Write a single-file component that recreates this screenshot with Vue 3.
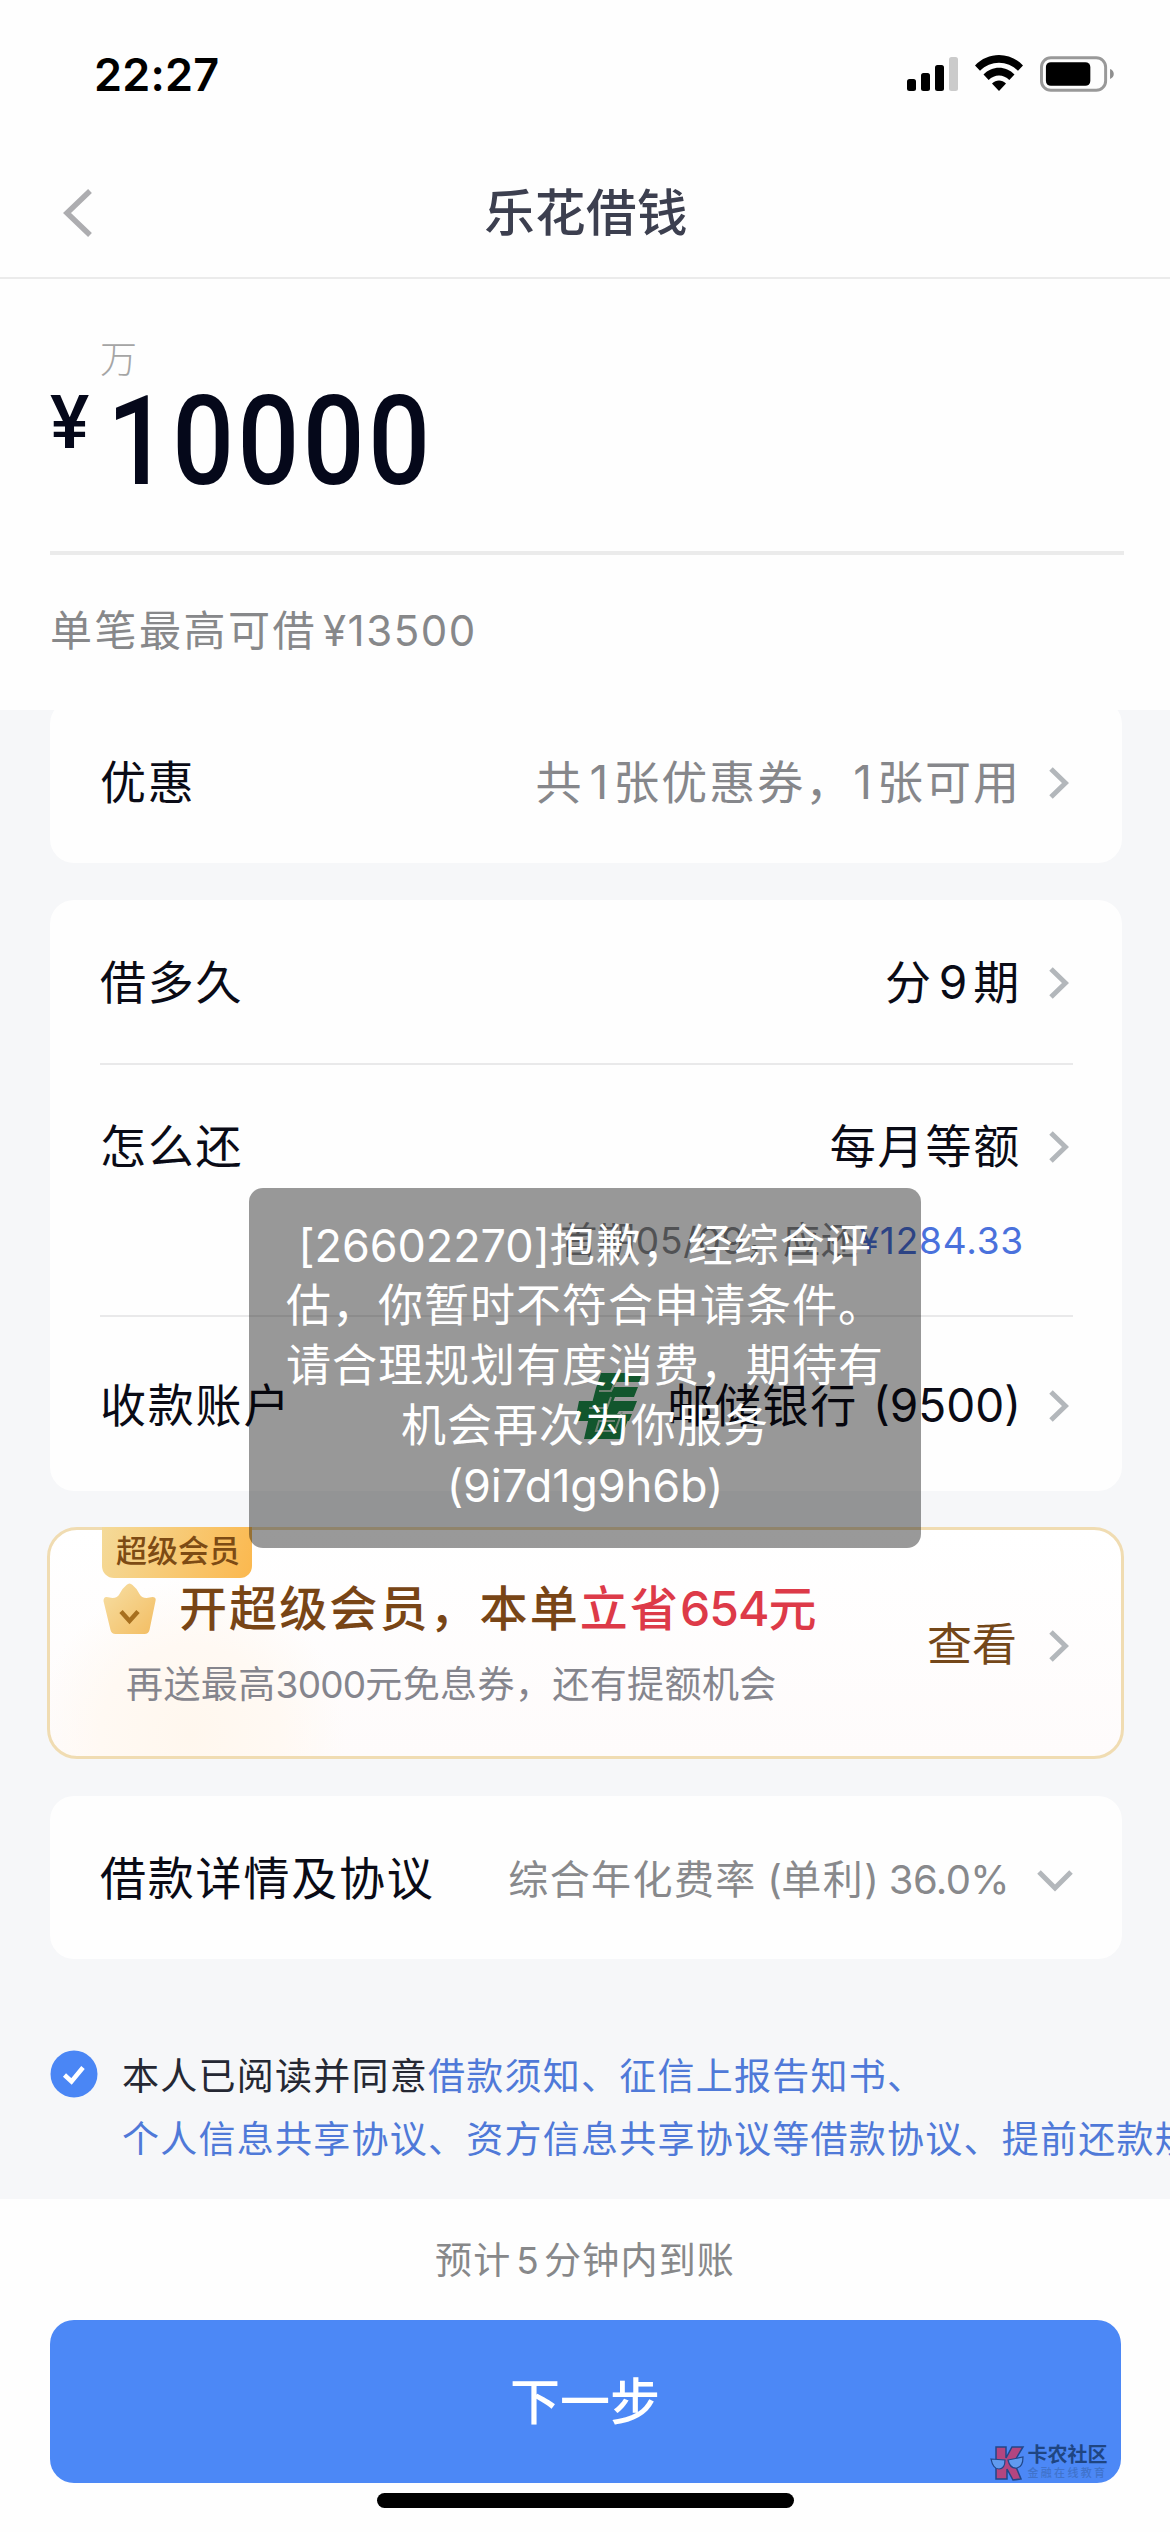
<script setup>
const toastLines = [
  { code: '[26602270]', text: '抱歉，经综合评' },
  { code: '', text: '估，你暂时不符合申请条件。' },
  { code: '', text: '请合理规划有度消费，期待有' },
  { code: '', text: '机会再次为你服务' },
  { code: '(9i7d1g9h6b)', text: '' },
]
</script>

<template>
  <div class="page">
    <div class="status">
      <span class="time">22:27</span>
      <div class="status-icons">
        <svg class="signal" viewBox="0 0 51 34">
          <rect x="0" y="22" width="9" height="12" rx="2.5" />
          <rect x="14" y="16" width="9" height="18" rx="2.5" />
          <rect x="28" y="8" width="9" height="26" rx="2.5" />
          <rect x="42" y="0" width="9" height="34" rx="2.5" fill="#cbcbcb" />
        </svg>
        <svg class="wifi" viewBox="0 0 48 36">
          <path d="M0 10.5C13-3.5 35-3.5 48 10.5L43 15.800C32.500 5 15.500 5 5 15.800Z" />
          <path d="M8.500 19.500C17 10.500 31 10.500 39.500 19.500L34.300 25C28.500 19 19.500 19 13.700 25Z" />
          <path d="M17 28.500C21 24.500 27 24.500 31 28.500L24 36Z" />
        </svg>
        <svg class="battery" viewBox="0 0 76 36">
          <rect x="1.500" y="1.500" width="65" height="33" rx="9.500" fill="none" stroke="#999" stroke-width="3" />
          <rect x="6" y="6" width="45" height="24" rx="5" />
          <path d="M71 13C76 14.500 76 21.500 71 23Z" fill="#8f8f8f" />
        </svg>
      </div>
    </div>

    <header class="nav">
      <svg class="back" viewBox="0 0 30 48"><path d="M27 2L4 24L27 46" /></svg>
      <h1>乐花借钱</h1>
    </header>

    <section class="amount">
      <div class="unit">万</div>
      <div class="money"><span class="yen">¥</span><span class="num">10000</span></div>
      <div class="limit">单笔最高可借<span class="limit-num">¥13500</span></div>
    </section>

    <main class="body">
      <div class="card coupon">
        <div class="row">
          <span>优惠</span>
          <span class="val muted">共<i class="one">1</i>张优惠券，<i class="free">1</i>张可用</span>
          <svg class="arrow" viewBox="0 0 20 32"><path d="M2 2L16.500 16L2 30" /></svg>
        </div>
      </div>

      <div class="card loan">
        <div class="row">
          <span>借多久</span>
          <span class="val">分<i class="nine">9</i>期</span>
          <svg class="arrow" viewBox="0 0 20 32"><path d="M2 2L16.500 16L2 30" /></svg>
        </div>
        <div class="divided repay">
          <div class="row">
            <span>怎么还</span>
            <span class="val">每月等额</span>
            <svg class="arrow" viewBox="0 0 20 32"><path d="M2 2L16.500 16L2 30" /></svg>
          </div>
          <div class="detail">首期05/09，应还<b>¥1284.33</b></div>
        </div>
        <div class="divided account">
          <div class="row">
            <span>收款账户</span>
            <svg class="bank" viewBox="0 0 68 66">
              <path d="M26 0H68L64 9H39L37 14H63L59 24H40L36 34H16L21 15Z" />
              <path d="M4 28H62L58 38H44L42 41H57L54 48H0Z" />
              <path d="M14 44H54L46 66H9Z" />
              <path class="slit" d="M24 18H36L41 8M14 35H32L36 24M40 48H24L21 58H40L47 39" />
            </svg>
            <span class="val bank-name">邮储银行 <em>(9500)</em></span>
            <svg class="arrow" viewBox="0 0 20 32"><path d="M2 2L16.500 16L2 30" /></svg>
          </div>
        </div>
      </div>

      <div class="member">
        <div class="tag">超级会员</div>
        <div class="member-main">
          <div class="member-title">
            <svg class="crown" viewBox="0 0 52 52">
              <defs>
                <linearGradient id="gold" x1="0" y1="0" x2="1" y2="1">
                  <stop offset="0" stop-color="#f7dfa4" /><stop offset="1" stop-color="#f3bd62" />
                </linearGradient>
              </defs>
              <path fill="url(#gold)" d="M23 2Q26-1 29 2Q33 5 36 11Q38 15 43 15L49 14Q53 14 52 18L46 47Q45 51 41 51H12Q8 51 7 47L0 18Q0 14 3 14L9 15Q14 15 16 11Q19 5 23 2Z" />
              <path d="M17.500 28.500L26 38L34.500 28.500" fill="none" stroke="#a8701f" stroke-width="4.500" />
            </svg>
            <span>开超级会员，本单<strong>立省<i>654</i>元</strong></span>
          </div>
          <div class="member-sub">再送最高<i>3000</i>元免息券，还有提额机会</div>
        </div>
        <div class="look">
          <span>查看</span>
          <svg class="arrow" viewBox="0 0 20 32"><path d="M2 2L16.500 16L2 30" /></svg>
        </div>
      </div>

      <div class="card terms">
        <div class="row">
          <span>借款详情及协议</span>
          <span class="rate">综合年化费率<i> (</i>单利<i>) 36.0%</i></span>
          <svg class="down" viewBox="0 0 36 22"><path d="M2 2L18 18L34 2" /></svg>
        </div>
      </div>

      <div class="agree">
        <svg class="check" viewBox="0 0 48 48">
          <circle cx="24" cy="24" r="23.500" fill="#4a86f5" />
          <path d="M14.500 25L21.500 31.500L33 17.500" fill="none" stroke="#fff" stroke-width="4.500" />
        </svg>
        <p>
          <span class="dark">本人已阅读并同意</span>借款须知、征信上报告知书、<br />
          个人信息共享协议、资方信息共享协议等借款协议、提前还款规则
        </p>
      </div>
    </main>

    <footer class="footer">
      <div class="eta">预计<i>5</i>分钟内到账</div>
      <button class="next">
        下一步
        <span class="mark">
          <svg viewBox="0 0 36 36">
            <path d="M6 2H16V13L22 2H33L24 17L31 34L23 35L17 24V34H6Z" fill="#b34680" stroke="#214789" stroke-width="1.500" />
            <path d="M1 14L15 15Q15 24 9 24Q3 24 1 14ZM18 15L33 12Q33 22 27 23Q20 24 18 15Z" fill="#609aef" stroke="#214789" stroke-width="1.200" />
          </svg>
          <span class="mark-text"><b>卡农社区</b><small>金融在线教育</small></span>
        </span>
      </button>
      <div class="home"></div>
    </footer>

    <div class="toast">
      <div v-for="(line, n) in toastLines" :key="n"><i>{{ line.code }}</i>{{ line.text }}</div>
    </div>
  </div>
</template>

<style>
body {
  margin: 0;
  background: #fefefe;
}
</style>

<style scoped>
.page {
  position: relative;
  width: 1170px;
  height: 2532px;
  overflow: hidden;
  display: flex;
  flex-direction: column;
  background: #fefefe;
  color: #0a0b16;
  font-family: Inter, "Noto Sans CJK SC", sans-serif;
  white-space: nowrap;
}
i, em { font-style: normal; }
svg { display: block; flex: none; }

.status {
  box-sizing: border-box;
  height: 148px;
  padding: 0 55px 0 94px;
  display: flex;
  align-items: center;
  justify-content: space-between;
}
.time { font-size: 45px; font-weight: 600; color: #000; letter-spacing: 0.2px; }
.status-icons { display: flex; align-items: center; }
.signal { width: 51px; height: 34px; margin-right: 17px; }
.wifi { width: 48px; height: 36px; margin: 0 17px 2px 0; }
.battery { width: 75px; height: 36px; }

.nav {
  box-sizing: border-box;
  height: 131px;
  display: flex;
  align-items: center;
  padding: 1px 64px 0 63px;
  border-bottom: 2px solid #ebebeb;
}
.back { width: 30px; height: 48px; fill: none; stroke: #adadb0; stroke-width: 5.500; }
h1 {
  flex: 1;
  margin: 0 27px 0 0;
  text-align: center;
  font-size: 50.500px;
  line-height: 70px;
  font-weight: 500;
  color: #3c3f4f;
  letter-spacing: 0.4px;
}

.amount { height: 431px; padding: 0 46px 0 50px; }
.unit { padding: 60px 0 0 50px; font-size: 37px; line-height: 42px; font-weight: 300; color: #a5a5a5; }
.money {
  box-sizing: border-box;
  height: 174px;
  display: flex;
  align-items: flex-start;
  font-family: Roboto, sans-serif;
  font-weight: 500;
  color: #05081a;
  border-bottom: 4px solid #ebebeb;
}
.yen { width: 57px; font-size: 74px; line-height: 74px; padding-top: 5px; }
.num {
  font-size: 125px;
  line-height: 125px;
  margin-top: -2px;
  letter-spacing: 4px;
  transform: scaleX(0.87);
  transform-origin: 0 0;
}
.limit {
  padding-top: 46px;
  font-size: 42px;
  line-height: 60px;
  letter-spacing: 2.500px;
  color: #87888a;
}
.limit-num { letter-spacing: 1.500px; margin-left: 6px; }

.body {
  height: 1489px;
  overflow: hidden;
  background: #f6f7f9;
  display: flex;
  flex-direction: column;
}
.card { box-sizing: border-box; width: 1072px; margin-left: 50px; padding: 0 49px 0 50px; background: #fefefe; border-radius: 24px; flex: none; }
.coupon { margin-top: -10px; height: 163px; }
.loan { margin-top: 37px; height: 591px; }
.row {
  height: 163px;
  display: flex;
  align-items: center;
  font-size: 46px;
  line-height: 70px;
  letter-spacing: 1.800px;
}
.row > span { padding-top: 1px; }
.val { margin-left: auto; margin-right: 28px; }
.muted { color: #86878b; letter-spacing: 2px; }
.muted .one { margin: 0 3px 0 6px; }
.free { margin-right: 3px; }
.nine { margin: 0 4px 0 6px; }
.arrow { width: 20px; height: 32px; margin-right: 4px; margin-top: 3px; fill: none; stroke: #b3b7bb; stroke-width: 5; }
.divided { border-top: 2px solid #e9e9ea; }
.repay { height: 250px; }
.repay .row { height: 161px; }
.detail {
  margin-top: -11px;
  padding-right: 49px;
  text-align: right;
  font-size: 37px;
  line-height: 52px;
  letter-spacing: 0.8px;
  color: #88898d;
}
.detail b { font-weight: 400; color: #4a71dc; }
.account .row { height: 175px; }
.bank { width: 68px; height: 66px; margin-left: auto; margin-top: 3px; fill: #1f8f4c; }
.slit { fill: none; stroke: #b9d8bf; stroke-width: 2; }
.bank-name { margin-left: 24px; }
.bank-name em { letter-spacing: 0; }

.member {
  box-sizing: border-box;
  position: relative;
  flex: none;
  width: 1077px;
  height: 232px;
  margin: 36px 0 37px 47px;
  border: 3px solid #f0dcb2;
  border-radius: 30px;
  background: radial-gradient(circle at 140px 205px, #fff7ee 0, #fff9f3 90px, rgba(255, 253, 251, 0) 155px), linear-gradient(#fff, #fefbfb);
  padding: 46px 48px 0 52px;
  display: flex;
  justify-content: space-between;
}
.tag {
  position: absolute;
  left: 52px;
  top: -3px;
  width: 150px;
  height: 51px;
  border-radius: 0 0 12px 12px;
  background: linear-gradient(110deg, #f4da99, #fbb84e);
  color: #7d4b14;
  font-size: 31px;
  line-height: 47px;
  font-weight: 500;
  text-indent: 2px;
  text-align: center;
}
.member-title {
  display: flex;
  align-items: center;
  height: 66px;
  font-size: 48px;
  font-weight: 500;
  line-height: 66px;
  letter-spacing: 2.100px;
  color: #784516;
}
.crown { width: 53px; height: 52px; margin: 0 23px 0 1px; }
.member-title strong { font-weight: 500; color: #dd3a48; }
.member-title strong i { letter-spacing: -1px; }
.member-sub { margin-top: 17px; padding-left: 24px; font-size: 37px; line-height: 52px; letter-spacing: 0.4px; color: #85858d; }
.member-sub i { letter-spacing: -0.8px; }
.look { display: flex; align-items: center; height: 139px; font-size: 45px; line-height: 60px; color: #744719; }
.look span { margin-right: 32px; padding-bottom: 2px; }
.look .arrow { margin-top: 0; }

.terms { height: 163px; }
.terms .rate { margin-left: auto; margin-right: 28px; padding-top: 4px; font-size: 40px; color: #88898c; letter-spacing: 1.400px; }
.rate i { letter-spacing: -0.6px; }
.down { width: 36px; height: 22px; fill: none; stroke: #b3b7bb; stroke-width: 5; margin-top: 6px; }

.agree { display: flex; align-items: flex-start; padding: 86px 0 0 50px; }
.check { width: 48px; height: 48px; margin: 5px 24px 0 0; }
.agree p { margin: 0; font-size: 37px; line-height: 63px; letter-spacing: 1.250px; color: #4f79d8; }
.dark { color: #252833; }

.footer { flex: 1; display: flex; flex-direction: column; align-items: center; }
.eta { height: 121px; line-height: 124px; font-size: 37px; letter-spacing: 1.200px; color: #87888a; }
.eta i { margin: 0 4px 0 5px; }
.next {
  position: relative;
  width: 1071px;
  height: 163px;
  border: 0;
  border-radius: 24px;
  background: #4c88f6;
  color: #fff;
  font: 500 50px/165px Inter, "Noto Sans CJK SC", sans-serif;
  padding: 0;
}
.mark { position: absolute; right: 13px; bottom: 2px; display: flex; align-items: center; }
.mark svg { width: 36px; height: 36px; margin-right: 2px; }
.mark-text { display: flex; flex-direction: column; color: #1f4582; text-align: left; }
.mark-text b { font-size: 20px; line-height: 21px; font-weight: 700; }
.mark-text small { font-size: 11px; line-height: 15px; letter-spacing: 2.300px; margin-right: -2px; color: #4073cc; }
.home { width: 417px; height: 15px; margin-top: 10px; border-radius: 8px; background: #000; }

.toast {
  box-sizing: border-box;
  position: absolute;
  left: 249px;
  top: 1188px;
  width: 672px;
  height: 360px;
  padding: 28px 0;
  border-radius: 14px;
  background: rgba(0, 0, 0, 0.4);
  color: #fff;
  text-align: center;
  font-size: 45px;
  line-height: 60px;
  letter-spacing: 1px;
}
.toast i { letter-spacing: -0.1px; }
</style>
